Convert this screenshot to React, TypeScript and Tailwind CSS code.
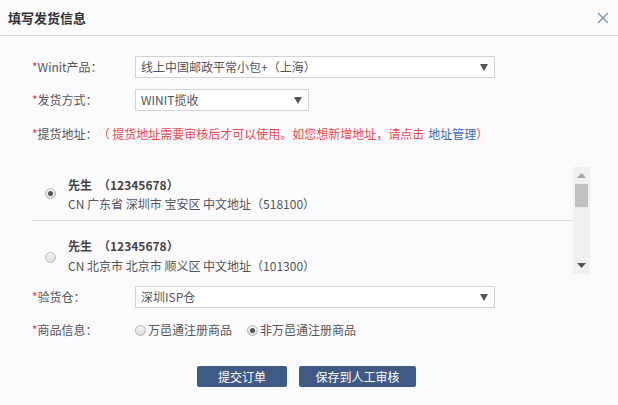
import React from "react";

const font = { fontFamily: '"Noto Sans CJK SC", "Noto Sans", sans-serif' };

function Select({ text, width }: { text: string; width: string }) {
  return (
    <div className={`${width} h-[22px] bg-white border border-[#d3d3d3] flex items-center justify-between pl-[5px] pr-[6px] text-[12px] text-[#555]`}>
      <span className="leading-none">{text}</span>
      <svg width="8" height="7" viewBox="0 0 8 7"><path d="M0 0 H8 L4 7 Z" fill="#555" /></svg>
    </div>
  );
}

function Label({ text }: { text: string }) {
  return (
    <div className="w-[103px] shrink-0 text-[12px] text-[#555]">
      <span className="text-[#e4393c]">*</span>
      {text}
    </div>
  );
}

function Radio({ checked }: { checked?: boolean }) {
  return (
    <span className="w-[11px] h-[11px] rounded-full border border-[#b5b5b5] bg-gradient-to-b from-[#f4f4f4] to-[#dcdcdc] flex items-center justify-center shrink-0">
      {checked && <span className="w-[5px] h-[5px] rounded-full bg-[#555]" />}
    </span>
  );
}

export default function App() {
  return (
    <div className="w-[618px] h-[405px] bg-[#fbfbfe] overflow-hidden" style={font}>
      <div className="h-[36px] border-b border-[#d4d4e4] flex items-center justify-between pl-[8px] pr-[9px]">
        <span className="text-[13px] font-bold text-[#333]">填写发货信息</span>
        <svg width="12" height="12" viewBox="0 0 12 12">
          <path d="M1 1 L11 11 M11 1 L1 11" stroke="#8a9bb8" strokeWidth="1.6" />
        </svg>
      </div>

      <div className="pl-[32px] pt-[20px]">
        <div className="flex items-center h-[22px]">
          <Label text="Winit产品：" />
          <Select text="线上中国邮政平常小包+（上海）" width="w-[360px]" />
        </div>
        <div className="flex items-center h-[22px] mt-[11px]">
          <Label text="发货方式：" />
          <Select text="WINIT揽收" width="w-[174px]" />
        </div>
        <div className="flex items-center mt-[14px] h-[18px] text-[12px]">
          <span className="text-[#e4393c]">*</span>
          <span className="text-[#555]">提货地址：</span>
          <span className="text-[#f0484d]">（ 提货地址需要审核后才可以使用。如您想新增地址，请点击</span>
          <span className="text-[#3c6aa8] ml-[4px]">地址管理</span>
          <span className="text-[#f0484d]"> ）</span>
        </div>

        <div className="mt-[24px] w-[558px] h-[107px] flex">
          <div className="flex-1 overflow-hidden">
            <div className="flex items-center border-b border-[#dcdcdc] h-[54px] pl-[13px]">
              <Radio checked />
              <div className="ml-[12px] text-[12px] text-[#555] pt-[1px]">
                <div className="leading-[19px] font-bold text-[#444]">先生　（12345678）</div>
                <div className="leading-[19px]">CN 广东省 深圳市 宝安区 中文地址（518100）</div>
              </div>
            </div>
            <div className="flex items-start h-[53px] pl-[13px]">
              <div className="mt-[31px]"><Radio /></div>
              <div className="ml-[12px] text-[12px] text-[#555] pt-[15px]">
                <div className="leading-[19px] font-bold text-[#444]">先生　（12345678）</div>
                <div className="leading-[14px] mt-[4px]">CN 北京市 北京市 顺义区 中文地址（101300）</div>
              </div>
            </div>
          </div>
          <div className="w-[17px] bg-[#f0f0f0] flex flex-col items-center">
            <svg className="mt-[6px]" width="9" height="5" viewBox="0 0 9 5"><path d="M0 5 H9 L4.5 0 Z" fill="#a3a3a3" /></svg>
            <div className="mt-[6px] w-[13px] h-[23px] bg-[#c1c1c1]" />
            <div className="flex-1" />
            <svg className="mb-[6px]" width="9" height="5" viewBox="0 0 9 5"><path d="M0 0 H9 L4.5 5 Z" fill="#505050" /></svg>
          </div>
        </div>

        <div className="flex items-center h-[22px] mt-[12px]">
          <Label text="验货仓：" />
          <Select text="深圳ISP仓" width="w-[360px]" />
        </div>
        <div className="flex items-center h-[18px] mt-[13px]">
          <Label text="商品信息：" />
          <div className="flex items-center text-[12px] text-[#555]">
            <Radio />
            <span className="ml-[2px]">万邑通注册商品</span>
            <span className="ml-[15px]"><Radio checked /></span>
            <span className="ml-[2px]">非万邑通注册商品</span>
          </div>
        </div>
      </div>

      <div className="flex mt-[27px] ml-[197px] gap-[12px]">
        <button className="w-[90px] h-[21px] bg-[#3f5a85] text-white text-[12px] rounded-[2px] leading-none">提交订单</button>
        <button className="w-[117px] h-[21px] bg-[#3f5a85] text-white text-[12px] rounded-[2px] leading-none">保存到人工审核</button>
      </div>
    </div>
  );
}
